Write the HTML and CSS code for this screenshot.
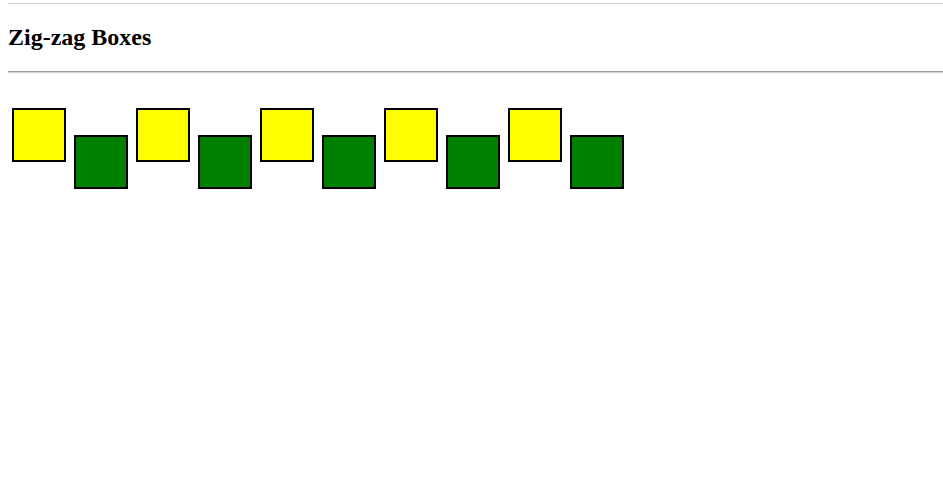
FILE: index.html
```html
<!DOCTYPE html>
<html>
<head>
<meta charset="utf-8">
<title>Zig-zag Boxes</title>
<link rel="stylesheet" href="styles.css">
</head>
<body>
<div class="topline"></div>
<h2 class="title">Zig-zag Boxes</h2>
<hr class="rule">
<div class="boxes">
  <div class="box up"></div>
  <div class="box down"></div>
  <div class="box up"></div>
  <div class="box down"></div>
  <div class="box up"></div>
  <div class="box down"></div>
  <div class="box up"></div>
  <div class="box down"></div>
  <div class="box up"></div>
  <div class="box down"></div>
</div>
</body>
</html>
```
FILE: styles.css
```css
html, body {
  background: #fff;
}
body {
  margin: 0 0 8px 8px;
  font-family: "Liberation Serif", "Times New Roman", serif;
  color: #000;
}
.topline {
  height: 3px;
  border-bottom: 1px solid #d3d3d3;
  margin-left: -8px;
}
.title {
  font-size: 24px;
  font-weight: bold;
  margin: 20px 0;
}
.rule {
  margin: 0;
  border: 0;
  border-top: 1px solid #9a9a9a;
  border-bottom: 1px solid #d0d0d0;
}
.boxes {
  display: flex;
  align-items: flex-start;
  padding-top: 35px;
}
.box {
  width: 50px;
  height: 50px;
  border: 2px solid #000;
  margin: 0 4px;
}
.up {
  background: #ffff00;
}
.down {
  background: #008000;
  margin-top: 27px;
}
```
